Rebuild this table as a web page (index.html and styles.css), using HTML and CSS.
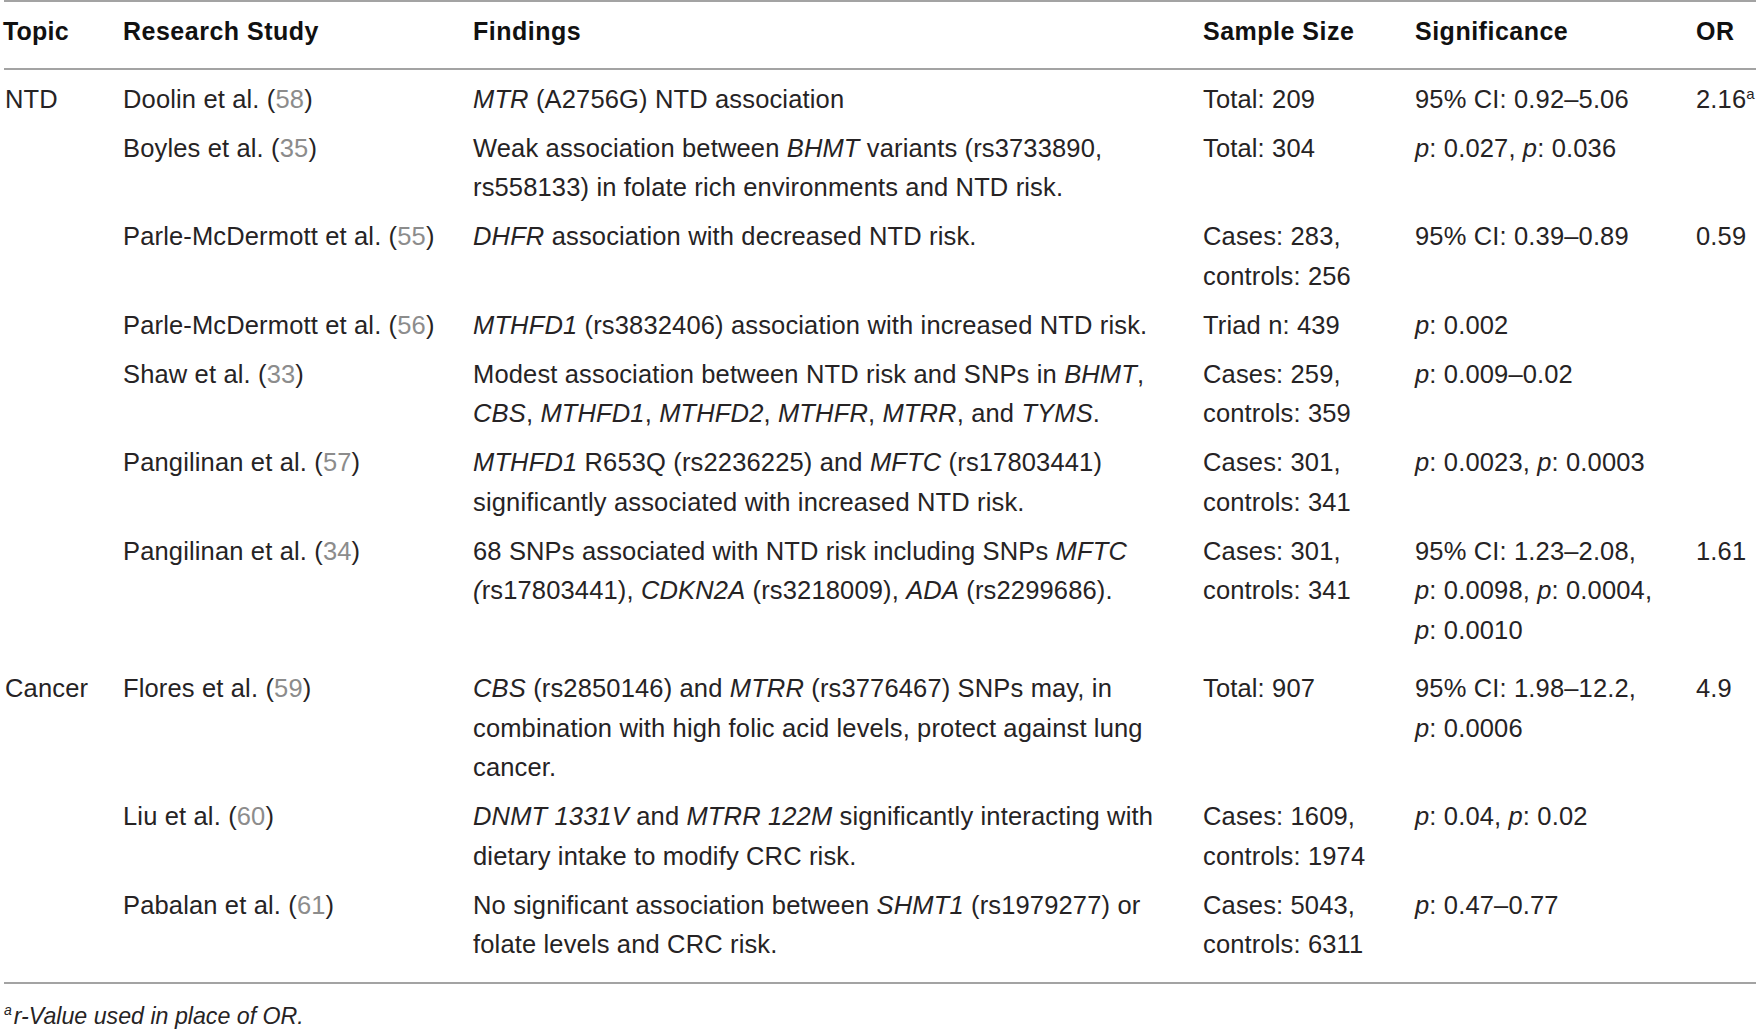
FILE: index.html
```html
<!DOCTYPE html>
<html>
<head>
<meta charset="utf-8">
<link rel="stylesheet" href="styles.css">
</head>
<body>
<div class="page">
<table class="tbl">
<colgroup>
<col class="c-topic"><col class="c-study"><col class="c-find"><col class="c-size"><col class="c-sig"><col class="c-or">
</colgroup>
<thead>
<tr><th class="topic-h">Topic</th><th>Research Study</th><th>Findings</th><th>Sample Size</th><th>Significance</th><th>OR</th></tr>
</thead>
<tbody>
<tr class="first">
<td>NTD</td><td>Doolin et al. (<span class="ref">58</span>)</td>
<td><i>MTR</i> (A2756G) NTD association</td>
<td>Total: 209</td><td>95% CI: 0.92–5.06</td><td>2.16<sup class="sup">a</sup></td>
</tr>
<tr>
<td></td><td>Boyles et al. (<span class="ref">35</span>)</td>
<td>Weak association between <i>BHMT</i> variants (rs3733890,<br>rs558133) in folate rich environments and NTD risk.</td>
<td>Total: 304</td><td><i>p</i>: 0.027, <i>p</i>: 0.036</td><td></td>
</tr>
<tr>
<td></td><td>Parle-McDermott et al. (<span class="ref">55</span>)</td>
<td><i>DHFR</i> association with decreased NTD risk.</td>
<td>Cases: 283,<br>controls: 256</td><td>95% CI: 0.39–0.89</td><td>0.59</td>
</tr>
<tr>
<td></td><td>Parle-McDermott et al. (<span class="ref">56</span>)</td>
<td><i>MTHFD1</i> (rs3832406) association with increased NTD risk.</td>
<td>Triad n: 439</td><td><i>p</i>: 0.002</td><td></td>
</tr>
<tr>
<td></td><td>Shaw et al. (<span class="ref">33</span>)</td>
<td>Modest association between NTD risk and SNPs in <i>BHMT</i>,<br><i>CBS</i>, <i>MTHFD1</i>, <i>MTHFD2</i>, <i>MTHFR</i>, <i>MTRR</i>, and <i>TYMS</i>.</td>
<td>Cases: 259,<br>controls: 359</td><td><i>p</i>: 0.009–0.02</td><td></td>
</tr>
<tr>
<td></td><td>Pangilinan et al. (<span class="ref">57</span>)</td>
<td><i>MTHFD1</i> R653Q (rs2236225) and <i>MFTC</i> (rs17803441)<br>significantly associated with increased NTD risk.</td>
<td>Cases: 301,<br>controls: 341</td><td><i>p</i>: 0.0023, <i>p</i>: 0.0003</td><td></td>
</tr>
<tr class="grouplast">
<td></td><td>Pangilinan et al. (<span class="ref">34</span>)</td>
<td>68 SNPs associated with NTD risk including SNPs <i>MFTC</i><br><i>(</i>rs17803441), <i>CDKN2A</i> (rs3218009), <i>ADA</i> (rs2299686).</td>
<td>Cases: 301,<br>controls: 341</td><td>95% CI: 1.23–2.08,<br><i>p</i>: 0.0098, <i>p</i>: 0.0004,<br><i>p</i>: 0.0010</td><td>1.61</td>
</tr>
<tr>
<td>Cancer</td><td>Flores et al. (<span class="ref">59</span>)</td>
<td><i>CBS</i> (rs2850146) and <i>MTRR</i> (rs3776467) SNPs may, in<br>combination with high folic acid levels, protect against lung<br>cancer.</td>
<td>Total: 907</td><td>95% CI: 1.98–12.2,<br><i>p</i>: 0.0006</td><td>4.9</td>
</tr>
<tr>
<td></td><td>Liu et al. (<span class="ref">60</span>)</td>
<td><i>DNMT 1331V</i> and <i>MTRR 122M</i> significantly interacting with<br>dietary intake to modify CRC risk.</td>
<td>Cases: 1609,<br>controls: 1974</td><td><i>p</i>: 0.04, <i>p</i>: 0.02</td><td></td>
</tr>
<tr class="last">
<td></td><td>Pabalan et al. (<span class="ref">61</span>)</td>
<td>No significant association between <i>SHMT1</i> (rs1979277) or<br>folate levels and CRC risk.</td>
<td>Cases: 5043,<br>controls: 6311</td><td><i>p</i>: 0.47–0.77</td><td></td>
</tr>
</tbody>
</table>
<p class="note"><sup class="nsup">a</sup>r-Value used in place of OR.</p>
</div>
</body>
</html>
```

FILE: styles.css
```css
html, body {
  margin: 0;
  padding: 0;
  background: #ffffff;
}
.page {
  padding-left: 4px;
  font-family: "Liberation Sans", Arial, sans-serif;
  font-size: 25.5px;
  letter-spacing: 0.15px;
  line-height: 39.5px;
  color: #262324;
}
.tbl {
  width: 1752px;
  border-collapse: collapse;
  table-layout: fixed;
  border-top: 2px solid #a3a3a3;
  border-bottom: 2px solid #a3a3a3;
}
.c-topic { width: 119px; }
.c-study { width: 350px; }
.c-find { width: 730px; }
.c-size { width: 212px; }
.c-sig { width: 281px; }
.c-or { width: 60px; }
.tbl thead tr {
  border-bottom: 2px solid #a3a3a3;
}
.tbl th {
  text-align: left;
  font-weight: bold;
  font-size: 25px;
  letter-spacing: 0.5px;
  color: #111111;
  padding: 10px 0 16px 0;
  vertical-align: top;
  white-space: nowrap;
}
.tbl th.topic-h { position: relative; left: -1px; letter-spacing: 0.2px; }
.tbl td {
  text-align: left;
  vertical-align: top;
  padding: 0 0 9.5px 0;
  white-space: nowrap;
}
.tbl td:first-child { padding-left: 1px; }
.tbl tr.first td { padding-top: 10px; }
.tbl tr.grouplast td { padding-bottom: 19px; }
.tbl tr.last td { padding-bottom: 17px; }
.ref { color: #8c8c8c; }
.sup {
  font-size: 15px;
  line-height: 0;
  vertical-align: 9px;
}
.note {
  margin: 13px 0 0 0;
  font-style: italic;
  font-size: 23.2px;
  letter-spacing: 0;
  line-height: 39.5px;
}
.nsup {
  font-size: 14px;
  line-height: 0;
  vertical-align: 9px;
  margin-right: 2px;
}
```
